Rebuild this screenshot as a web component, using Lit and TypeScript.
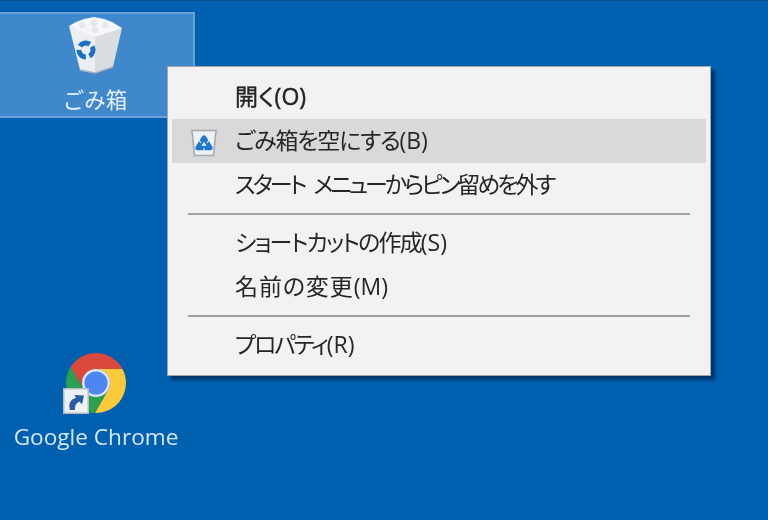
import {LitElement, html, css, svg} from 'lit';
import {customElement} from 'lit/decorators.js';

interface MenuRow {
  label: string;
  key?: string;
  bold?: boolean;
  active?: boolean;
  icon?: boolean;
  spacing: number;
}

const GROUPS: MenuRow[][] = [
  [
    {label: '開く', key: '(O)', bold: true, spacing: 0.4},
    {label: 'ごみ箱を空にする', key: '(B)', active: true, icon: true, spacing: -1.17},
    {label: 'スタート メニューからピン留めを外す', spacing: -2.95},
  ],
  [
    {label: 'ショートカットの作成', key: '(S)', spacing: -1.82},
    {label: '名前の変更', key: '(M)', spacing: 0.9},
  ],
  [{label: 'プロパティ', key: '(R)', spacing: -2.15}],
];

const binIcon = svg`
  <svg class="bin" width="72" height="72" viewBox="0 0 72 72">
    <path d="M20 60 L9 16 L35 25 L35 63 Z" fill="#eceff1"/>
    <path d="M35 25 L62 18 L53 57 L35 63 Z" fill="#d9dde0"/>
    <path d="M9 16 L16 12 L24 9 L34 7 L44 9 L52 12 L62 18 L35 27 Z" fill="#f4f6f7"/>
    <g fill="#e4e8ea">
      <circle cx="22" cy="15" r="3"/>
      <circle cx="34" cy="13" r="3.5"/>
      <circle cx="45" cy="15" r="3"/>
      <circle cx="35" cy="20" r="3"/>
    </g>
    <path d="M20 60 L35 63 L53 57" fill="none" stroke="#a9b0b6" stroke-width="1.5"/>
    <circle cx="26" cy="40" r="7" fill="none" stroke="#1a72c8" stroke-width="5"
      stroke-dasharray="11 3.7" transform="rotate(-30 26 40)"/>
  </svg>
`;

const smallBinIcon = svg`
  <svg width="28" height="30" viewBox="0 0 28 30">
    <path d="M2 2.5 L26 2.5 L23.5 27.5 L4.5 27.5 Z" fill="#eef1f3" stroke="#a3a9ae" stroke-width="1.6"/>
    <path d="M14 9.5 L20.5 20 L7.5 20 Z" fill="#eef4f8" stroke="#1c78cf" stroke-width="4.4" stroke-linejoin="round"/>
    <path d="M9 12 L11 15 M19 12 L17 15 M14 20 L14 24" stroke="#e4edf5" stroke-width="1.1"/>
  </svg>
`;

const chromeIcon = svg`
  <svg class="chrome" width="64" height="64" viewBox="-32 -32 64 64">
    <path d="M-25.4 -15.95 A30 30 0 0 1 26.5 -14 L0 -14 A14 14 0 0 0 -12.12 7 Z" fill="#d9483b"/>
    <path d="M26.5 -14 A30 30 0 0 1 -1.13 29.95 L12.12 7 A14 14 0 0 0 0 -14 Z" fill="#fbc93a"/>
    <path d="M-1.13 29.95 A30 30 0 0 1 -25.4 -15.95 L-12.12 7 A14 14 0 0 0 12.12 7 Z" fill="#2ba14f"/>
    <circle r="14" fill="#d9e6f5"/>
    <circle r="11.5" fill="#4c86ee"/>
  </svg>
`;

const shortcutIcon = svg`
  <svg class="shortcut" width="26" height="26" viewBox="0 0 26 26">
    <rect x="0.75" y="0.75" width="24.5" height="24.5" fill="#eef1f4" stroke="#b4bbc2" stroke-width="1.5"/>
    <path d="M7 22 C5 15 8 11 13 10 L11.5 7 L21 7.5 L19 16.5 L16.5 13.5 C13 15 11.5 18 12 22 Z" fill="#2a5da6"/>
  </svg>
`;

@customElement('app-root')
export class AppRoot extends LitElement {
  static styles = css`
    :host {
      display: block;
    }

    .desktop {
      position: relative;
      width: 768px;
      height: 520px;
      overflow: hidden;
      background: #0060b0;
      box-shadow: inset 0 1px 0 #0a4f8c;
      font-family: "Open Sans", "Noto Sans CJK JP", sans-serif;
    }

    .tile {
      position: absolute;
      left: 0;
      width: 195px;
      display: flex;
      flex-direction: column;
      align-items: center;
      filter: blur(0.5px);
    }

    .tile.selected {
      top: 12px;
      height: 106px;
      box-sizing: border-box;
      background: #3f88cc;
      border: 2px solid #69a3d9;
      border-left: none;
    }

    .tile.plain {
      top: 351px;
    }

    .bin {
      position: absolute;
      left: 60px;
      top: -4px;
      filter: blur(0.7px);
    }

    .chrome-wrap {
      position: relative;
      width: 64px;
      height: 64px;
      margin-left: -3px;
    }

    .shortcut {
      position: absolute;
      left: -1px;
      top: 37px;
    }

    .tile-label {
      color: #e6f0fa;
      font-size: 21.5px;
      line-height: 28px;
      white-space: nowrap;
      padding-right: 3px;
    }

    .selected .tile-label {
      margin-top: 72px;
    }

    .plain .tile-label {
      margin-top: 8px;
      color: #d6e7f6;
      font-size: 22.6px;
    }

    .menu {
      position: absolute;
      left: 167px;
      top: 66px;
      width: 544px;
      height: 310px;
      box-sizing: border-box;
      padding: 8px 4px;
      background: #f2f2f2;
      border: 1px solid #a6a6a6;
      box-shadow: 4px 4px 3px rgba(0, 30, 70, 0.65);
      color: #262626;
      font-size: 23px;
      font-feature-settings: "palt";
      display: flex;
      flex-direction: column;
    }

    .menu-text {
      filter: blur(0.4px);
      white-space: nowrap;
      word-spacing: 6px;
      padding-bottom: 5px;
    }

    .row {
      height: 44px;
      flex: none;
      display: flex;
      align-items: center;
    }

    .row.active {
      background: #d9d9d9;
    }

    .row.bold {
      -webkit-text-stroke: 0.45px #262626;
    }

    .row-icon {
      width: 63px;
      flex: none;
      display: flex;
      justify-content: center;
      padding-top: 3px;
      box-sizing: border-box;
      filter: blur(0.5px);
    }

    .sep {
      height: 2px;
      flex: none;
      margin: 6px 16px;
      background: #a0a0a0;
    }
  `;

  renderRow(row: MenuRow) {
    return html`
      <div class="row ${row.active ? 'active' : ''} ${row.bold ? 'bold' : ''}">
        <div class="row-icon">${row.icon ? smallBinIcon : ''}</div>
        <span class="menu-text"><span style="letter-spacing: ${row.spacing}px">${row.label}</span>${row.key ?? ''}</span>
      </div>
    `;
  }

  render() {
    return html`
      <div class="desktop">
        <div class="tile selected">
          ${binIcon}
          <div class="tile-label">ごみ箱</div>
        </div>
        <div class="tile plain">
          <div class="chrome-wrap">${chromeIcon}${shortcutIcon}</div>
          <div class="tile-label">Google Chrome</div>
        </div>
        <div class="menu">
          ${GROUPS.map(
            (group, index) => html`
              ${index > 0 ? html`<div class="sep"></div>` : ''}
              ${group.map((row) => this.renderRow(row))}
            `
          )}
        </div>
      </div>
    `;
  }
}
